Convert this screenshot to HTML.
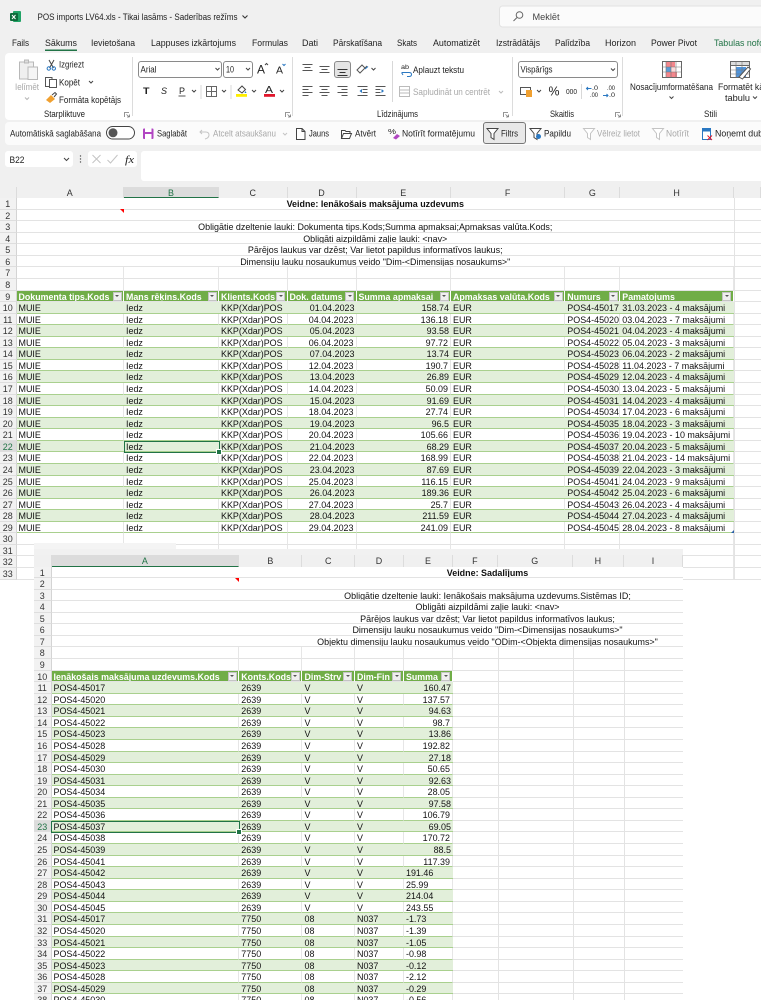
<!DOCTYPE html>
<html><head><meta charset="utf-8"><style>
html,body{margin:0;padding:0;background:#fff}
body{width:761px;height:999px;position:relative;overflow:hidden;font-family:"Liberation Sans",Arial,sans-serif}
body>*{filter:blur(.3px)}
#c{position:absolute;left:0;top:0}
#c text{font-family:"Liberation Sans",Arial,sans-serif;font-size:9.2px;fill:#222}
#c .m{fill:#a8a8a8}
#c .l{fill:#444}
.ch{position:absolute;display:flex;height:11.5px;background:#f0f0f0;font-size:8.95px;line-height:12px;color:#333;text-align:center}
.ch span{box-sizing:border-box;flex:none;border-right:1px solid #dcdcdc}
.ch .sel{background:#dcdcdc;color:#217346;border-bottom:1.5px solid #217346}
.sh{position:absolute;font-size:8.95px;color:#111;overflow:hidden;background:#fff}
.r{display:flex;height:11.57px;line-height:12px;--l:#e3e3e3}
.r span{flex:none;box-sizing:border-box;height:100%;padding:0 2px;white-space:nowrap;overflow:hidden;border-bottom:1px solid var(--l);position:relative}
.r span:first-child{background:#f2f2f2;color:#333;text-align:center;padding:0;border-right:1px solid #d4d4d4;border-bottom:1px solid #dedede}
.r span.s{background:#dcdcdc;color:#217346}
.r::after{content:"";flex:1;background:#fff;border-bottom:1px solid #e3e3e3;box-sizing:border-box}
.g{background:#e2efda;--l:#a9d08e}
.w{background:#fff;--l:#a9d08e}
.w span,.e span{border-right:1px solid #e6e6e6}
.r .mg{text-align:center;padding:0}
.h span+span{background:#70ad47;color:#fff;font-weight:bold;font-size:8.85px;border-right:1px solid #fff;border-bottom:1px solid #e3e3e3}
.h span+span::before{content:"";position:absolute;right:1.5px;top:1px;width:9px;height:9px;box-sizing:border-box;background:#efefef;border:1px solid #c4c4c4}
.h span+span::after{content:"";position:absolute;right:4px;top:4.500px;border:2px solid transparent;border-top:2.500px solid #555;border-bottom:0}
#a .r span:nth-child(2){width:107.500px}
#a .r span:nth-child(3){width:95px}
#a .r span:nth-child(4){width:68.500px}
#a .r span:nth-child(5){width:69px}
#a .r span:nth-child(6){width:94.500px}
#a .r span:nth-child(7){width:114.300px}
#a .r span:nth-child(8){width:55px}
#a .r span:nth-child(9){width:113.700px}
#a .r span:first-child{width:16.500px}
#a .r .mg{width:717.500px!important}
#a .r::after{border-left:1px solid #e3e3e3}
#a .d span:nth-child(5),#a .d span:nth-child(6){text-align:right}
#b .r span:first-child{width:17.500px}
#b .r span:nth-child(2){width:187.800px}
#b .r span:nth-child(3){width:63.200px}
#b .r span:nth-child(4){width:52.500px}
#b .r span:nth-child(5){width:49px}
#b .r span:nth-child(6){width:49px}
#b .r .mg{width:872px!important}
#b .d span:nth-child(6){text-align:right}
#b .d.l span:nth-child(6){text-align:left}
#b .r::after{background:linear-gradient(#e3e3e3,#e3e3e3) 44.700px 0/1px 100% no-repeat,linear-gradient(#e3e3e3,#e3e3e3) 119.700px 0/1px 100% no-repeat,linear-gradient(#e3e3e3,#e3e3e3) 171px 0/1px 100% no-repeat,#fff}
#b .r.nf::after{display:none}
.box{position:absolute;box-sizing:border-box;border:1.500px solid #217346}
.box i{position:absolute;right:-3px;bottom:-3px;width:4px;height:4px;background:#217346;border:.5px solid #fff}
</style></head><body>

<svg id="c" width="761" height="199" viewBox="0 0 761 199" xmlns="http://www.w3.org/2000/svg">
<rect width="761" height="199" fill="#f0f0f0"/>
<!-- logo -->
<rect x="13" y="11" width="8" height="11" rx="1" fill="#21a366"/><rect x="10" y="13" width="8" height="8" rx="1" fill="#0e6b3a"/><path d="M12 15l3.500 4M15.500 15l-3.500 4" stroke="#fff" fill="none"/>
<text x="37.500" y="20" textLength="200" lengthAdjust="spacingAndGlyphs">POS imports LV64.xls  -  Tikai lasāms  -  Saderības režīms</text>
<path d="M242.500 15.500l2.500 2.500 2.500-2.500" fill="none" stroke="#333" stroke-width="1.100"/>
<rect x="499.500" y="6" width="270" height="21" rx="3" fill="#fbfbfb" stroke="#e2e2e2"/>
<circle cx="519.500" cy="15" r="3.300" fill="none" stroke="#666"/><path d="M517 17.500l-3.500 3.500" stroke="#666" fill="none"/>
<text x="532.500" y="20" textLength="27" lengthAdjust="spacingAndGlyphs" class="l">Meklēt</text>
<!-- tabs -->
<text x="12" y="46" textLength="17" lengthAdjust="spacingAndGlyphs">Fails</text>
<text x="45" y="46" textLength="32" lengthAdjust="spacingAndGlyphs">Sākums</text>
<rect x="45" y="49.500" width="32" height="1.500" fill="#217346"/>
<text x="91" y="46" textLength="44" lengthAdjust="spacingAndGlyphs">Ievietošana</text>
<text x="151" y="46" textLength="85" lengthAdjust="spacingAndGlyphs">Lappuses izkārtojums</text>
<text x="252" y="46" textLength="36" lengthAdjust="spacingAndGlyphs">Formulas</text>
<text x="302" y="46" textLength="16" lengthAdjust="spacingAndGlyphs">Dati</text>
<text x="333" y="46" textLength="49" lengthAdjust="spacingAndGlyphs">Pārskatīšana</text>
<text x="397" y="46" textLength="20" lengthAdjust="spacingAndGlyphs">Skats</text>
<text x="433" y="46" textLength="47" lengthAdjust="spacingAndGlyphs">Automatizēt</text>
<text x="496" y="46" textLength="44" lengthAdjust="spacingAndGlyphs">Izstrādātājs</text>
<text x="555" y="46" textLength="35" lengthAdjust="spacingAndGlyphs">Palīdzība</text>
<text x="605" y="46" textLength="31" lengthAdjust="spacingAndGlyphs">Horizon</text>
<text x="651" y="46" textLength="46" lengthAdjust="spacingAndGlyphs">Power Pivot</text>
<text x="714" y="46" textLength="50" lengthAdjust="spacingAndGlyphs" style="fill:#217346">Tabulas nofo</text>
<!-- ribbon -->
<rect x="5" y="53" width="780" height="67" rx="4" fill="#fff"/>
<path d="M132.500 57v59M292.500 57v59M512.500 57v59M622.500 57v59" stroke="#dcdcdc"/>
<path d="M201 85v14M231 85v14M392.500 61v41M581.500 84v15" stroke="#d8d8d8"/>
<!-- clipboard group -->
<g fill="none" stroke="#b8b8b8"><rect x="19.500" y="62" width="14" height="17" fill="#efefef"/><rect x="24.500" y="60" width="4" height="3" fill="#ddd"/><rect x="28" y="67" width="9.500" height="12.500" fill="#f5f5f5"/></g>
<text x="15" y="90" textLength="24" lengthAdjust="spacingAndGlyphs" class="m">Ielīmēt</text>
<path d="M25 97.500l2 2 2-2" fill="none" stroke="#b5b5b5"/>
<path d="M49 60l4.500 8M54 60l-4.500 8" stroke="#444" fill="none"/><circle cx="48.800" cy="68.500" r="1.700" fill="none" stroke="#2a78c2"/><circle cx="53.800" cy="68.500" r="1.700" fill="none" stroke="#2a78c2"/>
<text x="59" y="67.500" textLength="25" lengthAdjust="spacingAndGlyphs">Izgriezt</text>
<g fill="#fff" stroke="#555"><rect x="45.500" y="77.500" width="6.500" height="9"/><rect x="49.500" y="79.500" width="7" height="8"/></g>
<text x="59" y="85.500" textLength="21" lengthAdjust="spacingAndGlyphs">Kopēt</text>
<path d="M89 81l2 2 2-2" fill="none" stroke="#444"/>
<path d="M46 100l5-5 4 4-5 4z" fill="#f0a030"/><path d="M52 95l3-2.500 1.500 1.500-2.500 3" fill="none" stroke="#444"/>
<text x="59" y="103" textLength="62" lengthAdjust="spacingAndGlyphs">Formāta kopētājs</text>
<text x="44" y="117" textLength="41" lengthAdjust="spacingAndGlyphs">Starpliktuve</text>
<g fill="none" stroke="#777" stroke-width=".8"><path d="M124.500 117v-4.500h4.500M129.500 117h-2.500M129.500 117v-2.500M126.500 114.500l3 2.500"/><path d="M285.500 117v-4.500h4.500M290.500 117h-2.500M290.500 117v-2.500M287.500 114.500l3 2.500"/><path d="M503.500 117v-4.500h4.500M508.500 117h-2.500M508.500 117v-2.500M505.500 114.500l3 2.500"/><path d="M615.500 117v-4.500h4.500M620.500 117h-2.500M620.500 117v-2.500M617.500 114.500l3 2.500"/></g>
<!-- font group -->
<rect x="138.500" y="61.500" width="83" height="16" rx="2.500" fill="#fff" stroke="#8a8a8a"/>
<text x="140.500" y="72.500" textLength="16" lengthAdjust="spacingAndGlyphs">Arial</text>
<path d="M215.500 68l2 2 2-2" fill="none" stroke="#444"/>
<rect x="223.500" y="61.500" width="29" height="16" rx="2.500" fill="#fff" stroke="#8a8a8a"/>
<text x="226" y="72.500" textLength="8" lengthAdjust="spacingAndGlyphs">10</text>
<path d="M246 68l2 2 2-2" fill="none" stroke="#444"/>
<text x="257" y="73.500" style="font-size:12px" textLength="8" lengthAdjust="spacingAndGlyphs">A</text><path d="M265 65l1.500-1.500 1.500 1.500" fill="none" stroke="#444"/>
<text x="276" y="73.500" style="font-size:10.500px" textLength="7" lengthAdjust="spacingAndGlyphs">A</text><path d="M282.500 64l1.500 1.500 1.500-1.500" fill="none" stroke="#2a78c2"/>
<text x="143" y="94" style="font-size:9.500px;font-weight:bold" textLength="6.500" lengthAdjust="spacingAndGlyphs">T</text>
<text x="161" y="94" style="font-size:9.500px;font-style:italic" textLength="6" lengthAdjust="spacingAndGlyphs">S</text>
<text x="179" y="94" style="font-size:9.500px" textLength="6" lengthAdjust="spacingAndGlyphs">P</text><path d="M178.500 96h7" stroke="#555"/>
<path d="M192 90l2 2 2-2M222 90l2 2 2-2M252 90l2 2 2-2M280 90l2 2 2-2" fill="none" stroke="#444"/>
<path d="M206.500 86.500h10v10h-10zM211.500 86.500v10M206.500 91.500h10" fill="none" stroke="#666"/>
<path d="M238 90l4-4 3.500 3.500-3.500 3.500z" fill="#fff" stroke="#444"/><path d="M245.500 91l1 2h-2z" fill="#2a78c2"/>
<rect x="236" y="94" width="11" height="2.800" fill="#ffee00"/>
<text x="265" y="93" style="font-size:10.500px" textLength="8" lengthAdjust="spacingAndGlyphs">A</text>
<rect x="264" y="94" width="11" height="2.800" fill="#e0162b"/>
<!-- alignment -->
<rect x="334.500" y="61.500" width="16" height="16" rx="2.500" fill="#e4e4e4" stroke="#8a8a8a"/>
<g stroke="#555" fill="none">
<path d="M302.500 64.500h10M304.500 67.500h6M302.500 70.500h10"/>
<path d="M319.500 66.500h10M321.500 69.500h6M319.500 72.500h10"/>
<path d="M337.500 69.500h10M339.500 72.500h6M337.500 75.500h10" stroke="#333"/>
<path d="M302.500 86.500h10M302.500 89.500h6M302.500 92.500h10M302.500 95.500h6"/>
<path d="M319.500 86.500h10M321.500 89.500h6M319.500 92.500h10M321.500 95.500h6"/>
<path d="M337.500 86.500h10M341.500 89.500h6M337.500 92.500h10M341.500 95.500h6"/>
<path d="M357.500 86.500h10M362.500 89.500h5M362.500 92.500h5M357.500 95.500h10"/>
<path d="M375.500 86.500h10M375.500 89.500h5M375.500 92.500h5M375.500 95.500h10"/>
</g>
<path d="M362 89l-2.500 2 2.500 2z" fill="#2a78c2"/><path d="M381.500 89l2.500 2-2.500 2z" fill="#2a78c2"/>
<path d="M357 70l5-5 3 3-5 5zM362 71l5-5" fill="none" stroke="#555"/><path d="M365 69l3-2.500" stroke="#2a78c2" fill="none"/>
<path d="M371.500 68l2 2 2-2" fill="none" stroke="#444"/>
<text x="401" y="69" style="font-size:6.500px" textLength="8" lengthAdjust="spacingAndGlyphs">ab</text><path d="M402 72.500h7q2.500 0 2.500 2t-2.500 2h-2M403 75l-1.500-2.500" fill="none" stroke="#2a78c2"/>
<text x="413" y="73" textLength="51" lengthAdjust="spacingAndGlyphs">Aplauzt tekstu</text>
<path d="M399.500 86.500h10v10h-10zM399.500 90h10M399.500 93h10" fill="none" stroke="#bbb"/>
<text x="413" y="95" textLength="77" lengthAdjust="spacingAndGlyphs" class="m">Sapludināt un centrēt</text>
<path d="M499 91l2 2 2-2" fill="none" stroke="#bbb"/>
<text x="377" y="117" textLength="41" lengthAdjust="spacingAndGlyphs">Līdzinājums</text>
<!-- number -->
<rect x="518.500" y="61.500" width="99" height="16" rx="2.500" fill="#fff" stroke="#8a8a8a"/>
<text x="520.500" y="72.500" textLength="32" lengthAdjust="spacingAndGlyphs">Vispārīgs</text>
<path d="M611 68.500l2 2 2-2M537 90l2 2 2-2" fill="none" stroke="#444"/>
<rect x="520.500" y="87.500" width="10" height="7" fill="#fff" stroke="#555"/><rect x="526" y="90" width="6" height="7" fill="#f0a030"/>
<text x="548.500" y="95.500" style="font-size:12.500px" textLength="11" lengthAdjust="spacingAndGlyphs">%</text>
<text x="566" y="94" style="font-size:7.500px" textLength="11" lengthAdjust="spacingAndGlyphs">000</text>
<text x="592" y="90" style="font-size:6px" textLength="6" lengthAdjust="spacingAndGlyphs">.0</text><text x="590" y="97" style="font-size:6px" textLength="8" lengthAdjust="spacingAndGlyphs">.00</text>
<path d="M586.500 88.500h5M588 87l-1.500 1.500 1.500 1.500" fill="none" stroke="#2a78c2"/>
<text x="607" y="90" style="font-size:6px" textLength="8" lengthAdjust="spacingAndGlyphs">.00</text><text x="609" y="97" style="font-size:6px" textLength="6" lengthAdjust="spacingAndGlyphs">.0</text>
<path d="M603 95.500h5M606.500 94l1.500 1.500-1.500 1.500" fill="none" stroke="#2a78c2"/>
<text x="550" y="117" textLength="24" lengthAdjust="spacingAndGlyphs">Skaitlis</text>
<!-- styles -->
<g>
<rect x="662.500" y="61.500" width="19" height="16" fill="#fff" stroke="#666"/>
<rect x="666" y="62" width="9" height="5" fill="#f4868c"/><rect x="666" y="67" width="5" height="5" fill="#5b9bd5"/><rect x="671" y="67" width="5" height="5" fill="#fbdada"/><rect x="666" y="72" width="11" height="5" fill="#f4868c"/>
<path d="M662.500 67h19M662.500 72h19M666 61.500v16M671 61.500v16M676 61.500v16" stroke="#777" stroke-width=".6" fill="none"/>
</g>
<text x="630" y="90" textLength="83" lengthAdjust="spacingAndGlyphs">Nosacījumformatēšana</text>
<path d="M669.500 96.500l2 2 2-2" fill="none" stroke="#444"/>
<g>
<rect x="730.500" y="61.500" width="19" height="16" fill="#fff" stroke="#666"/>
<rect x="730.500" y="61.500" width="19" height="4" fill="#ddd" stroke="#666"/>
<rect x="736" y="67" width="10" height="10" fill="#4f94dc"/>
<path d="M730.500 70h19M730.500 74h19M736 61.500v16M742 61.500v16" stroke="#777" stroke-width=".6" fill="none"/>
<path d="M739 77l9-10 2.500 2-8 10z" fill="#fff" stroke="#555"/>
</g>
<text x="718" y="90" textLength="46" lengthAdjust="spacingAndGlyphs">Formatēt kā</text>
<text x="725" y="101" textLength="25" lengthAdjust="spacingAndGlyphs">tabulu</text>
<path d="M753 96.500l2 2 2-2" fill="none" stroke="#444"/>
<text x="704" y="117" textLength="13" lengthAdjust="spacingAndGlyphs">Stili</text>
<!-- QAT -->
<rect x="5" y="122" width="780" height="23" rx="4" fill="#fbfbfb"/>
<text x="10" y="136.500" textLength="91" lengthAdjust="spacingAndGlyphs">Automātiskā saglabāšana</text>
<rect x="106.500" y="126.500" width="28" height="12.500" rx="6.200" fill="#fff" stroke="#444"/><circle cx="113" cy="132.800" r="4.500" fill="#555"/>
<rect x="143" y="128.500" width="10.500" height="10.500" rx="1" fill="#b146c2"/><rect x="145" y="128.500" width="6.500" height="3.500" fill="#fff"/><rect x="145" y="134" width="6.500" height="5" fill="#fff"/>
<text x="157" y="136.500" textLength="30" lengthAdjust="spacingAndGlyphs">Saglabāt</text>
<path d="M202 130l-2 2 2 2M200.500 132h5q3.500 0 3.500 3t-4 4" fill="none" stroke="#c4c4c4"/>
<text x="213" y="136.500" textLength="63" lengthAdjust="spacingAndGlyphs" class="m">Atcelt atsaukšanu</text>
<path d="M283 133l2 2 2-2" fill="none" stroke="#c4c4c4"/>
<path d="M296.500 128.500h5.500l3 3v8h-8.500zM302 128.500v3h3" fill="#fff" stroke="#444"/>
<text x="309" y="136.500" textLength="20" lengthAdjust="spacingAndGlyphs">Jauns</text>
<path d="M341.500 138.500v-8h3.500l1 1h4v2M341.500 138.500h8l2-5h-8z" fill="#fff" stroke="#444"/>
<text x="355" y="136.500" textLength="21" lengthAdjust="spacingAndGlyphs">Atvērt</text>
<text x="388" y="134" style="font-size:7px" textLength="8" lengthAdjust="spacingAndGlyphs">%</text><path d="M393 138l4-4 3 2-4 3.500z" fill="#b146c2"/>
<text x="402" y="136.500" textLength="73" lengthAdjust="spacingAndGlyphs">Notīrīt formatējumu</text>
<rect x="483.500" y="122.500" width="42" height="21" rx="2.500" fill="#e8e8e8" stroke="#777"/>
<path d="M487 128.500h11l-4 5v6l-3-2v-4z" fill="#fff" stroke="#444"/>
<text x="501" y="136.500" textLength="17" lengthAdjust="spacingAndGlyphs">Filtrs</text>
<path d="M530 128.500h11l-4 5v6l-3-2v-4z" fill="#fff" stroke="#444"/><circle cx="538.500" cy="136.500" r="2.500" fill="#2a78c2"/>
<text x="544" y="136.500" textLength="27" lengthAdjust="spacingAndGlyphs">Papildu</text>
<path d="M583.500 128.500h11l-4 5v6l-3-2v-4z" fill="#fff" stroke="#c4c4c4"/>
<text x="597" y="136.500" textLength="43" lengthAdjust="spacingAndGlyphs" class="m">Vēlreiz lietot</text>
<path d="M652.500 128.500h11l-4 5v6l-3-2v-4z" fill="#fff" stroke="#c4c4c4"/>
<text x="666" y="136.500" textLength="23" lengthAdjust="spacingAndGlyphs" class="m">Notīrīt</text>
<rect x="702.500" y="128.500" width="8" height="11" fill="#fff" stroke="#2a78c2"/><rect x="702.500" y="128.500" width="8" height="3" fill="#2a78c2"/><path d="M707.500 135.500l4.500 4.500M712 135.500l-4.500 4.500" stroke="#e0162b" fill="none"/>
<text x="715" y="136.500" textLength="48" lengthAdjust="spacingAndGlyphs">Noņemt dub</text>
<!-- formula bar -->
<rect x="5" y="151" width="68" height="16" rx="3" fill="#fff"/>
<text x="9.500" y="163" textLength="15" lengthAdjust="spacingAndGlyphs">B22</text>
<path d="M64 158l2.500 2.500 2.500-2.500" fill="none" stroke="#444"/>
<circle cx="80.500" cy="156" r=".7" fill="#555"/><circle cx="80.500" cy="159" r=".7" fill="#555"/><circle cx="80.500" cy="162" r=".7" fill="#555"/>
<rect x="88" y="151" width="49" height="16" rx="3" fill="#fff"/>
<path d="M92.500 155l8 8M100.500 155l-8 8M107.500 160l3 3 7-8" fill="none" stroke="#c4c4c4"/>
<text x="125" y="163" style="font-size:11px;font-style:italic;font-family:'Liberation Serif',serif" textLength="9" lengthAdjust="spacingAndGlyphs">fx</text>
<rect x="141" y="151" width="640" height="30" rx="3" fill="#fff"/>
<path d="M9 197l6-7v7z" fill="#d4d4d4"/>
</svg>

<div class="ch" style="left:0;top:186.500px;width:761px">
<span style="width:16.500px"></span><span style="width:107.500px">A</span><span class="sel" style="width:95px">B</span><span style="width:68.500px">C</span><span style="width:69px">D</span><span style="width:94.500px">E</span><span style="width:114.300px">F</span><span style="width:55px">G</span><span style="width:113.700px">H</span><span style="flex:1"></span>
</div>

<div class="sh" id="a" style="left:0;top:198px;width:761px;height:382px">
<div class="r"><span>1</span><span class="mg"><b>Veidne: Ienākošais maksājuma uzdevums</b></span></div>
<div class="r"><span>2</span><span class="mg"></span></div>
<div class="r"><span>3</span><span class="mg">Obligātie dzeltenie lauki: Dokumenta tips.Kods;Summa apmaksai;Apmaksas valūta.Kods;</span></div>
<div class="r"><span>4</span><span class="mg">Obligāti aizpildāmi zaļie lauki: &lt;nav&gt;</span></div>
<div class="r"><span>5</span><span class="mg">Pārējos laukus var dzēst; Var lietot papildus informatīvos laukus;</span></div>
<div class="r"><span>6</span><span class="mg">Dimensiju lauku nosaukumus veido "Dim-&lt;Dimensijas nosaukums&gt;"</span></div>
<div class="r e"><span>7</span><span></span><span></span><span></span><span></span><span></span><span></span><span></span><span></span></div>
<div class="r e"><span>8</span><span></span><span></span><span></span><span></span><span></span><span></span><span></span><span></span></div>
<div class="r h"><span>9</span><span>Dokumenta tips.Kods</span><span>Mans rēķins.Kods</span><span>Klients.Kods</span><span>Dok. datums</span><span>Summa apmaksai</span><span>Apmaksas valūta.Kods</span><span>Numurs</span><span>Pamatojums</span></div>
<div class="r d g"><span>10</span><span>MUIE</span><span>Iedz</span><span>KKP(Xdar)POS</span><span>01.04.2023</span><span>158.74</span><span>EUR</span><span>POS4-45017</span><span>31.03.2023 - 4 maksājumi</span></div>
<div class="r d w"><span>11</span><span>MUIE</span><span>Iedz</span><span>KKP(Xdar)POS</span><span>04.04.2023</span><span>136.18</span><span>EUR</span><span>POS4-45020</span><span>03.04.2023 - 7 maksājumi</span></div>
<div class="r d g"><span>12</span><span>MUIE</span><span>Iedz</span><span>KKP(Xdar)POS</span><span>05.04.2023</span><span>93.58</span><span>EUR</span><span>POS4-45021</span><span>04.04.2023 - 4 maksājumi</span></div>
<div class="r d w"><span>13</span><span>MUIE</span><span>Iedz</span><span>KKP(Xdar)POS</span><span>06.04.2023</span><span>97.72</span><span>EUR</span><span>POS4-45022</span><span>05.04.2023 - 3 maksājumi</span></div>
<div class="r d g"><span>14</span><span>MUIE</span><span>Iedz</span><span>KKP(Xdar)POS</span><span>07.04.2023</span><span>13.74</span><span>EUR</span><span>POS4-45023</span><span>06.04.2023 - 2 maksājumi</span></div>
<div class="r d w"><span>15</span><span>MUIE</span><span>Iedz</span><span>KKP(Xdar)POS</span><span>12.04.2023</span><span>190.7</span><span>EUR</span><span>POS4-45028</span><span>11.04.2023 - 7 maksājumi</span></div>
<div class="r d g"><span>16</span><span>MUIE</span><span>Iedz</span><span>KKP(Xdar)POS</span><span>13.04.2023</span><span>26.89</span><span>EUR</span><span>POS4-45029</span><span>12.04.2023 - 4 maksājumi</span></div>
<div class="r d w"><span>17</span><span>MUIE</span><span>Iedz</span><span>KKP(Xdar)POS</span><span>14.04.2023</span><span>50.09</span><span>EUR</span><span>POS4-45030</span><span>13.04.2023 - 5 maksājumi</span></div>
<div class="r d g"><span>18</span><span>MUIE</span><span>Iedz</span><span>KKP(Xdar)POS</span><span>15.04.2023</span><span>91.69</span><span>EUR</span><span>POS4-45031</span><span>14.04.2023 - 4 maksājumi</span></div>
<div class="r d w"><span>19</span><span>MUIE</span><span>Iedz</span><span>KKP(Xdar)POS</span><span>18.04.2023</span><span>27.74</span><span>EUR</span><span>POS4-45034</span><span>17.04.2023 - 6 maksājumi</span></div>
<div class="r d g"><span>20</span><span>MUIE</span><span>Iedz</span><span>KKP(Xdar)POS</span><span>19.04.2023</span><span>96.5</span><span>EUR</span><span>POS4-45035</span><span>18.04.2023 - 3 maksājumi</span></div>
<div class="r d w"><span>21</span><span>MUIE</span><span>Iedz</span><span>KKP(Xdar)POS</span><span>20.04.2023</span><span>105.66</span><span>EUR</span><span>POS4-45036</span><span>19.04.2023 - 10 maksājumi</span></div>
<div class="r d g"><span class="s">22</span><span>MUIE</span><span>Iedz</span><span>KKP(Xdar)POS</span><span>21.04.2023</span><span>68.29</span><span>EUR</span><span>POS4-45037</span><span>20.04.2023 - 5 maksājumi</span></div>
<div class="r d w"><span>23</span><span>MUIE</span><span>Iedz</span><span>KKP(Xdar)POS</span><span>22.04.2023</span><span>168.99</span><span>EUR</span><span>POS4-45038</span><span>21.04.2023 - 14 maksājumi</span></div>
<div class="r d g"><span>24</span><span>MUIE</span><span>Iedz</span><span>KKP(Xdar)POS</span><span>23.04.2023</span><span>87.69</span><span>EUR</span><span>POS4-45039</span><span>22.04.2023 - 3 maksājumi</span></div>
<div class="r d w"><span>25</span><span>MUIE</span><span>Iedz</span><span>KKP(Xdar)POS</span><span>25.04.2023</span><span>116.15</span><span>EUR</span><span>POS4-45041</span><span>24.04.2023 - 9 maksājumi</span></div>
<div class="r d g"><span>26</span><span>MUIE</span><span>Iedz</span><span>KKP(Xdar)POS</span><span>26.04.2023</span><span>189.36</span><span>EUR</span><span>POS4-45042</span><span>25.04.2023 - 6 maksājumi</span></div>
<div class="r d w"><span>27</span><span>MUIE</span><span>Iedz</span><span>KKP(Xdar)POS</span><span>27.04.2023</span><span>25.7</span><span>EUR</span><span>POS4-45043</span><span>26.04.2023 - 4 maksājumi</span></div>
<div class="r d g"><span>28</span><span>MUIE</span><span>Iedz</span><span>KKP(Xdar)POS</span><span>28.04.2023</span><span>211.59</span><span>EUR</span><span>POS4-45044</span><span>27.04.2023 - 4 maksājumi</span></div>
<div class="r d w"><span>29</span><span>MUIE</span><span>Iedz</span><span>KKP(Xdar)POS</span><span>29.04.2023</span><span>241.09</span><span>EUR</span><span>POS4-45045</span><span>28.04.2023 - 8 maksājumi</span></div>
<div class="r e"><span>30</span><span></span><span></span><span></span><span></span><span></span><span></span><span></span><span></span></div>
<div class="r e"><span>31</span><span></span><span></span><span></span><span></span><span></span><span></span><span></span><span></span></div>
<div class="r e"><span>32</span><span></span><span></span><span></span><span></span><span></span><span></span><span></span><span></span></div>
<div class="r e"><span>33</span><span></span><span></span><span></span><span></span><span></span><span></span><span></span><span></span></div>
<div style="position:absolute;left:120px;top:11px;border-top:4px solid #f00;border-left:4px solid transparent"></div>
<div style="position:absolute;left:731px;top:332px;border-bottom:3px solid #2a5fa8;border-left:3px solid transparent"></div>
<div class="box" style="left:124px;top:242.900px;width:96px;height:12.600px"><i></i></div>
</div>

<!-- second window -->
<div style="position:absolute;left:34px;top:543px;width:142px;height:12px;background:#f4f4f4;border-radius:0 0 4px 0"></div>
<div style="position:absolute;left:34px;top:549px;width:649px;height:6px;background:#f1f1f1"></div>
<div class="ch" style="left:34px;top:555px;width:649px">
<span style="width:17.500px"></span><span class="sel" style="width:187.800px">A</span><span style="width:63.200px">B</span><span style="width:52.500px">C</span><span style="width:49px">D</span><span style="width:49px">E</span><span style="width:44.700px">F</span><span style="width:75px">G</span><span style="width:51.300px">H</span><span style="flex:1">I</span>
</div>
<div class="sh" id="b" style="left:34px;top:566.500px;width:649px;height:433px">
<div class="r nf"><span>1</span><span class="mg"><b>Veidne: Sadalījums</b></span></div>
<div class="r nf"><span>2</span><span class="mg"></span></div>
<div class="r nf"><span>3</span><span class="mg">Obligātie dzeltenie lauki: Ienākošais maksājuma uzdevums.Sistēmas ID;</span></div>
<div class="r nf"><span>4</span><span class="mg">Obligāti aizpildāmi zaļie lauki: &lt;nav&gt;</span></div>
<div class="r nf"><span>5</span><span class="mg">Pārējos laukus var dzēst; Var lietot papildus informatīvos laukus;</span></div>
<div class="r nf"><span>6</span><span class="mg">Dimensiju lauku nosaukumus veido "Dim-&lt;Dimensijas nosaukums&gt;"</span></div>
<div class="r nf"><span>7</span><span class="mg">Objektu dimensiju lauku nosaukumus veido "ODim-&lt;Objekta dimensijas nosaukums&gt;"</span></div>
<div class="r e"><span>8</span><span></span><span></span><span></span><span></span><span></span></div>
<div class="r e"><span>9</span><span></span><span></span><span></span><span></span><span></span></div>
<div class="r h"><span>10</span><span>Ienākošais maksājuma uzdevums.Kods</span><span>Konts.Kods</span><span>Dim-Strv</span><span>Dim-Fin</span><span>Summa</span></div>
<div class="r d g"><span>11</span><span>POS4-45017</span><span>2639</span><span>V</span><span>V</span><span>160.47</span></div>
<div class="r d w"><span>12</span><span>POS4-45020</span><span>2639</span><span>V</span><span>V</span><span>137.57</span></div>
<div class="r d g"><span>13</span><span>POS4-45021</span><span>2639</span><span>V</span><span>V</span><span>94.63</span></div>
<div class="r d w"><span>14</span><span>POS4-45022</span><span>2639</span><span>V</span><span>V</span><span>98.7</span></div>
<div class="r d g"><span>15</span><span>POS4-45023</span><span>2639</span><span>V</span><span>V</span><span>13.86</span></div>
<div class="r d w"><span>16</span><span>POS4-45028</span><span>2639</span><span>V</span><span>V</span><span>192.82</span></div>
<div class="r d g"><span>17</span><span>POS4-45029</span><span>2639</span><span>V</span><span>V</span><span>27.18</span></div>
<div class="r d w"><span>18</span><span>POS4-45030</span><span>2639</span><span>V</span><span>V</span><span>50.65</span></div>
<div class="r d g"><span>19</span><span>POS4-45031</span><span>2639</span><span>V</span><span>V</span><span>92.63</span></div>
<div class="r d w"><span>20</span><span>POS4-45034</span><span>2639</span><span>V</span><span>V</span><span>28.05</span></div>
<div class="r d g"><span>21</span><span>POS4-45035</span><span>2639</span><span>V</span><span>V</span><span>97.58</span></div>
<div class="r d w"><span>22</span><span>POS4-45036</span><span>2639</span><span>V</span><span>V</span><span>106.79</span></div>
<div class="r d g"><span class="s">23</span><span>POS4-45037</span><span>2639</span><span>V</span><span>V</span><span>69.05</span></div>
<div class="r d w"><span>24</span><span>POS4-45038</span><span>2639</span><span>V</span><span>V</span><span>170.72</span></div>
<div class="r d g"><span>25</span><span>POS4-45039</span><span>2639</span><span>V</span><span>V</span><span>88.5</span></div>
<div class="r d w"><span>26</span><span>POS4-45041</span><span>2639</span><span>V</span><span>V</span><span>117.39</span></div>
<div class="r d l g"><span>27</span><span>POS4-45042</span><span>2639</span><span>V</span><span>V</span><span>191.46</span></div>
<div class="r d l w"><span>28</span><span>POS4-45043</span><span>2639</span><span>V</span><span>V</span><span>25.99</span></div>
<div class="r d l g"><span>29</span><span>POS4-45044</span><span>2639</span><span>V</span><span>V</span><span>214.04</span></div>
<div class="r d l w"><span>30</span><span>POS4-45045</span><span>2639</span><span>V</span><span>V</span><span>243.55</span></div>
<div class="r d l g"><span>31</span><span>POS4-45017</span><span>7750</span><span>08</span><span>N037</span><span>-1.73</span></div>
<div class="r d l w"><span>32</span><span>POS4-45020</span><span>7750</span><span>08</span><span>N037</span><span>-1.39</span></div>
<div class="r d l g"><span>33</span><span>POS4-45021</span><span>7750</span><span>08</span><span>N037</span><span>-1.05</span></div>
<div class="r d l w"><span>34</span><span>POS4-45022</span><span>7750</span><span>08</span><span>N037</span><span>-0.98</span></div>
<div class="r d l g"><span>35</span><span>POS4-45023</span><span>7750</span><span>08</span><span>N037</span><span>-0.12</span></div>
<div class="r d l w"><span>36</span><span>POS4-45028</span><span>7750</span><span>08</span><span>N037</span><span>-2.12</span></div>
<div class="r d l g"><span>37</span><span>POS4-45029</span><span>7750</span><span>08</span><span>N037</span><span>-0.29</span></div>
<div class="r d l w"><span>38</span><span>POS4-45030</span><span>7750</span><span>08</span><span>N037</span><span>-0.56</span></div>
<div style="position:absolute;left:201px;top:11px;border-top:4px solid #f00;border-left:4px solid transparent"></div>
<div class="box" style="left:17px;top:254.200px;width:189px;height:12.600px"><i></i></div>
</div>
</body></html>
